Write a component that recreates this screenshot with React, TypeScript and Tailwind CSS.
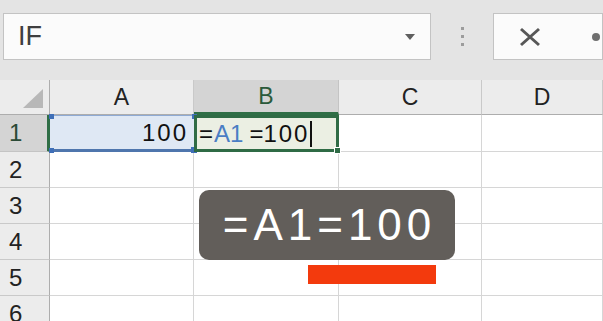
import React from 'react';

const font = { fontFamily: '"Liberation Sans", "Noto Sans CJK JP", sans-serif' };

const cols = ['A', 'B', 'C', 'D'];
const rows = [1, 2, 3, 4, 5, 6];

const Toolbar = () => (
  <div className="h-[80px] flex items-start pt-[13px] bg-[#e4e4e4]">
    {/* Name box */}
    <div className="ml-[3px] w-[436px] h-[47px] bg-[#fbfbfb] border border-[#c3c3c3] flex items-center pl-[14px] pr-[15px]">
      <span className="text-[27px] text-[#3f3f3f] leading-none flex-1">IF</span>
      <svg width="10" height="6" viewBox="0 0 10 6">
        <path d="M0 0 H10 L5 6 Z" fill="#5f5f5f" />
      </svg>
    </div>

    {/* Separator dots */}
    <div className="w-[63px] h-[47px] flex flex-col items-center justify-center gap-[5px]">
      <span className="w-[3px] h-[3px] bg-[#9c9c9c]" />
      <span className="w-[3px] h-[3px] bg-[#9c9c9c]" />
      <span className="w-[3px] h-[3px] bg-[#9c9c9c]" />
    </div>

    {/* Cancel / enter buttons */}
    <div className="w-[110px] shrink-0 h-[47px] bg-[#fbfbfb] border border-[#c3c3c3] flex items-center pl-[25px]">
      <svg width="22" height="20" viewBox="0 0 22 20">
        <path d="M2 2 L20 18 M20 2 L2 18" stroke="#575757" strokeWidth="3" />
      </svg>
      <span className="ml-[51px] w-[8px] h-[8px] rounded-full bg-[#6f6f6f]" />
    </div>
  </div>
);

const Sheet = () => (
  <div className="grid grid-cols-[50px_144px_145px_143px_121px] grid-rows-[35px_37px_36px_36px_36px_36px_36px] bg-white">
    {/* corner */}
    <div className="bg-[#ececec] border-r border-b border-[#adadad] flex items-end justify-end pr-[6px] pb-[6px]">
      <svg width="20" height="19" viewBox="0 0 20 19">
        <path d="M20 0 V19 H0 Z" fill="#b8b8b8" />
      </svg>
    </div>
    {cols.map((c) => (
      <div
        key={c}
        className={
          c === 'B'
            ? 'bg-[#d4d4d4] border-r border-[#c4c4c4] border-b-[3px] border-b-[#2f6e46] flex items-center justify-center text-[23px] text-[#2b5a3a]'
            : 'bg-[#ececec] border-r border-[#c9c9c9] border-b border-b-[#adadad] flex items-center justify-center text-[23px] text-[#222]'
        }
      >
        {c}
      </div>
    ))}

    {rows.map((r) => (
      <React.Fragment key={r}>
        <div
          className={
            r === 1
              ? 'bg-[#d4d4d4] border-r-[3px] border-r-[#2f6e46] border-b border-[#c4c4c4] flex items-center pl-[9px] text-[24px] text-[#2b4a36]'
              : 'bg-[#ececec] border-r border-r-[#adadad] border-b border-[#c9c9c9] flex items-center pl-[9px] text-[24px] text-[#222]'
          }
        >
          {r}
        </div>
        {cols.map((c) => {
          if (r === 1 && c === 'A') {
            return (
              <div
                key={c}
                className="relative bg-[#dfe8f4] border-t border-[#8eaad4] border-b-[3px] border-b-[#4f76ad] flex items-center justify-end pr-[6px] text-[24px] text-[#111] tracking-[2px]"
              >
                100
                <span className="absolute -left-[1px] -top-[2px] w-[5px] h-[5px] bg-[#3f6fb8]" />
                <span className="absolute -right-[3px] -top-[2px] w-[5px] h-[5px] bg-[#3f6fb8]" />
                <span className="absolute -left-[1px] -bottom-[4px] w-[5px] h-[5px] bg-[#3f6fb8]" />
                <span className="absolute -right-[3px] -bottom-[4px] w-[6px] h-[6px] bg-[#3f6fb8]" />
              </div>
            );
          }
          if (r === 1 && c === 'B') {
            return (
              <div
                key={c}
                className="relative bg-[#ebefe3] border-[3px] border-[#2f6b45] flex items-center pl-[2px] text-[24px] text-[#111]"
              >
                <span>=</span>
                <span className="text-[#4a7ec4] ml-[1px]">A1</span>
                <span className="ml-[6px]">=</span>
                <span className="tracking-[2px]">100</span>
                <span className="ml-[1px] w-[1.5px] h-[26px] bg-[#111]" />
                <span className="absolute -right-[5px] -bottom-[5px] w-[7px] h-[7px] bg-[#2f6b45] border border-white" />
              </div>
            );
          }
          return <div key={c} className="border-r border-b border-[#d6d6d6]" />;
        })}
      </React.Fragment>
    ))}
  </div>
);

export default function App() {
  return (
    <div className="w-[603px] h-[321px] overflow-hidden relative bg-white" style={font}>
      <Toolbar />
      <Sheet />

      {/* formula caption */}
      <div className="absolute left-[199px] top-[190px] w-[256px] h-[70px] rounded-[10px] bg-[#625e5a] flex items-center justify-center">
        <span className="text-[44px] text-white leading-none tracking-[5px] pl-[5px]">
          =A1=100
        </span>
      </div>
      <div className="absolute left-[308px] top-[265px] w-[128px] h-[19px] bg-[#f33a0d]" />
    </div>
  );
}
